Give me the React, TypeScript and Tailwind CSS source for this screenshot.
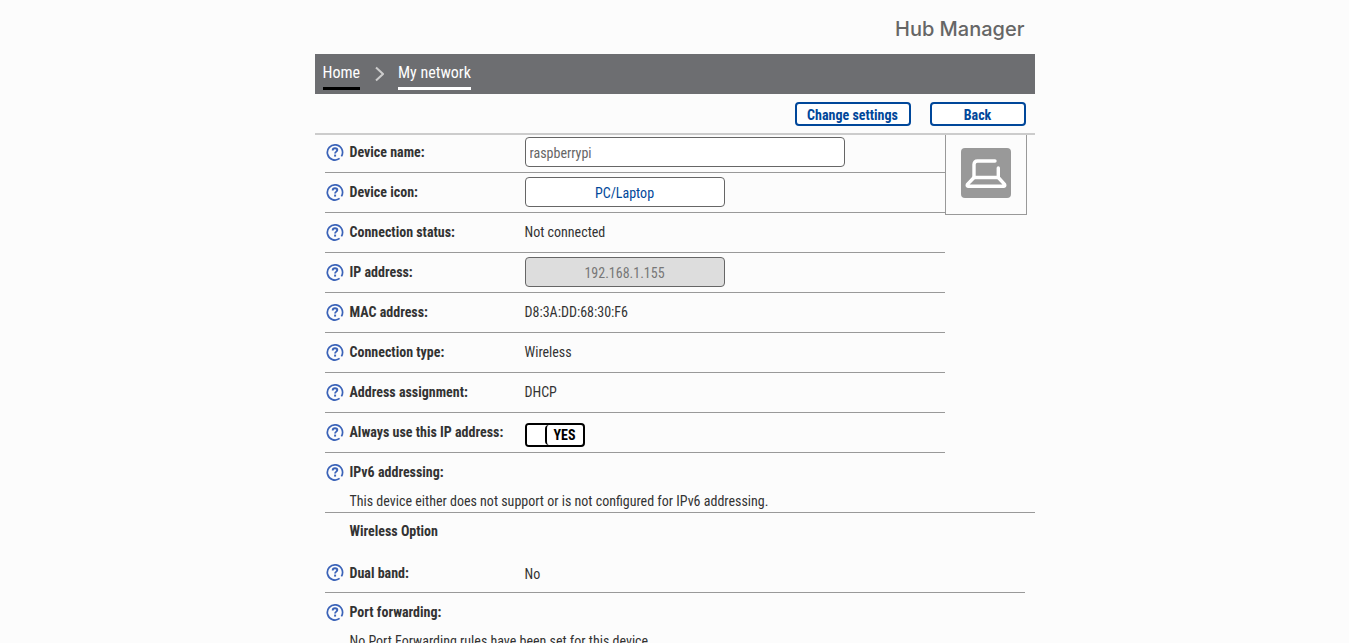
import { useState, type ReactNode } from "react";

function HelpIcon() {
  return (
    <svg viewBox="0 0 18 18" className="h-[18px] w-[18px]" fill="none" aria-hidden="true">
      <path
        d="M13.6 15.4A7.6 7.6 0 1 1 15.4 13.4"
        stroke="#3b63b8"
        strokeWidth="1.7"
      />
      <path
        d="M6.7 7.4C6.7 6 7.6 5.2 9 5.2S11.3 6 11.3 7.1C11.3 8.6 9.1 8.7 9.1 10.5"
        stroke="#3b63b8"
        strokeWidth="1.9"
      />
      <rect x="8.1" y="11.6" width="2" height="2" fill="#3b63b8" />
    </svg>
  );
}

function LaptopIcon() {
  return (
    <svg viewBox="0 0 50 50" className="h-[50px] w-[50px] rounded bg-[#999]" fill="none" aria-hidden="true">
      <g stroke="#fff" strokeWidth="3.4" strokeLinecap="round" strokeLinejoin="round">
        <path d="M34 13H16.5Q13 13 13 16.5V29.5H37.3V20" />
        <path d="M13 29.5L6.4 36.4Q5.6 38.2 7.6 38.2H42.4Q44.4 38.2 43.6 36.4L37.3 29.5" />
      </g>
    </svg>
  );
}

function HelpButton({ topic }: { topic: string }) {
  return (
    <button type="button" aria-label={`Help: ${topic}`} className="flex w-[25px] shrink-0 justify-start pl-px">
      <HelpIcon />
    </button>
  );
}

type RowProps = {
  label: string;
  htmlFor?: string;
  children?: ReactNode;
};

function Row({ label, htmlFor, children }: RowProps) {
  return (
    <div className="flex h-10 items-center border-b border-[#999] pb-[2px]">
      <HelpButton topic={label} />
      <div className="w-[175px] shrink-0 font-bold">
        {htmlFor ? <label htmlFor={htmlFor}>{label}</label> : label}
      </div>
      {children}
    </div>
  );
}

const actionButton = "h-6 rounded border-2 border-[#00479a] bg-white pt-px font-bold leading-5 text-[#00479a]";

export default function App() {
  const [name, setName] = useState("raspberrypi");
  const [always, setAlways] = useState(true);

  return (
    <div className="min-h-screen bg-[#fcfcfc] font-['Roboto_Condensed','Roboto',sans-serif] text-[14px] leading-5 text-[#333]">
      <div className="mx-auto max-w-[720px]">
        <header className="flex h-[54px] items-center justify-end pt-1 pr-[10px]">
          <h1 className="font-['Inter',sans-serif] text-[20px] font-medium text-[#666]">Hub Manager</h1>
        </header>

        <nav className="flex h-10 items-end bg-[#6d6e71] px-2 pb-1 text-[16px] leading-[28px] text-white">
          <a href="#home" className="border-b-3 border-black">Home</a>
          <svg viewBox="0 0 10 16" className="mx-[14px] mb-2 h-4 w-[10px]" fill="none" aria-hidden="true">
            <path d="M2 1.5L9 8L2 14.5" stroke="#ccc" strokeWidth="2" />
          </svg>
          <a href="#network" className="border-b-3 border-white">My network</a>
        </nav>

        <div className="flex h-[41px] justify-end gap-[19px] border-b-2 border-[#ccc] pt-2 pr-[9px]">
          <button type="button" className={`${actionButton} w-[116px]`}>Change settings</button>
          <button type="button" className={`${actionButton} w-24`}>Back</button>
        </div>

        <main className="pl-[10px]">
          <div className="-mt-[2px] flex items-start">
            <div className="min-w-0 flex-1">
              <Row label="Device name:" htmlFor="device-name">
                <input
                  id="device-name"
                  value={name}
                  onChange={(e) => setName(e.target.value)}
                  className="h-[30px] w-80 rounded border border-[#666] bg-white px-1 pt-[3px] text-[#666]"
                />
              </Row>
              <Row label="Device icon:">
                <button type="button" className="h-[30px] w-[200px] rounded border border-[#666] bg-white pt-[3px] text-[#00479a]">
                  PC/Laptop
                </button>
              </Row>
              <Row label="Connection status:">Not connected</Row>
              <Row label="IP address:" htmlFor="ip-address">
                <input
                  id="ip-address"
                  value="192.168.1.155"
                  disabled
                  className="h-[30px] w-[200px] rounded border border-[#666] bg-[#ddd] px-1 pt-[3px] text-center text-[#777]"
                />
              </Row>
              <Row label="MAC address:">D8:3A:DD:68:30:F6</Row>
              <Row label="Connection type:">Wireless</Row>
              <Row label="Address assignment:">DHCP</Row>
              <Row label="Always use this IP address:" htmlFor="always-use">
                <label className="mt-[6px] flex h-6 w-[60px] cursor-pointer overflow-hidden rounded border-2 border-black bg-white text-black">
                  <input
                    id="always-use"
                    type="checkbox"
                    checked={always}
                    onChange={(e) => setAlways(e.target.checked)}
                    className="sr-only"
                  />
                  <span className="w-[18px] bg-white" />
                  <span className="flex-1 rounded-l border-l-2 border-black text-center font-bold">
                    {always ? "YES" : "NO"}
                  </span>
                </label>
              </Row>
            </div>
            <div className="mt-[2px] mr-2 flex h-20 w-[82px] items-center justify-center border border-t-0 border-[#999] pb-[3px]">
              <LaptopIcon />
            </div>
          </div>

          <section className="h-[60px] border-b border-[#999]">
            <div className="flex h-[38px] items-center">
              <HelpButton topic="IPv6 addressing" />
              <h2 className="font-bold">IPv6 addressing:</h2>
            </div>
            <p className="pl-[25px]">This device either does not support or is not configured for IPv6 addressing.</p>
          </section>

          <section className="mr-[10px] h-20 border-b border-[#999]">
            <h2 className="pt-2 pl-[25px] font-bold">Wireless Option</h2>
            <div className="mt-3 flex h-[38px] items-center">
              <HelpButton topic="Dual band" />
              <div className="w-[175px] pt-[2px] font-bold">Dual band:</div>
              <div className="pt-1">No</div>
            </div>
          </section>

          <section className="h-[60px]">
            <div className="flex h-[38px] items-center">
              <HelpButton topic="Port forwarding" />
              <h2 className="font-bold">Port forwarding:</h2>
            </div>
            <p className="pl-[25px]">No Port Forwarding rules have been set for this device.</p>
          </section>
        </main>
      </div>
    </div>
  );
}
